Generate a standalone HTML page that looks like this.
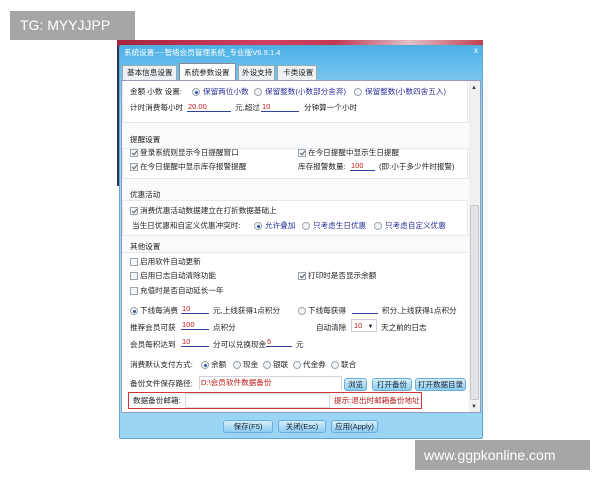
<!DOCTYPE html>
<html><head><meta charset="utf-8"><style>
*{margin:0;padding:0;box-sizing:border-box}
body{width:600px;height:480px;background:#fff;position:relative;overflow:hidden;font-family:"Liberation Sans","Noto Sans CJK SC",sans-serif;font-size:7.6px;color:#222}
.a{position:absolute;white-space:nowrap;line-height:10px}
.b{color:#2a2f9a}
.r{color:#c01818}
.u{position:absolute;border-bottom:1px solid #3340a0;height:10px;line-height:10px;color:#c01818;font-size:7.5px;padding-left:1px}
.cb{position:absolute;width:8px;height:8px;border:1px solid #9aa4ae;background:#f4f6f8}
.cb.on::after{content:"";position:absolute;left:1.5px;top:0px;width:2px;height:4px;border:solid #555;border-width:0 1px 1px 0;transform:rotate(40deg)}
.rd{position:absolute;width:8px;height:8px;border:1px solid #9aa4ae;border-radius:50%;background:#f4f6f8}
.rd.on::after{content:"";position:absolute;left:1.5px;top:1.5px;width:3px;height:3px;border-radius:50%;background:#2a52a8}
.sec{position:absolute;left:122px;width:346px;border:1px solid #e6e9ec;border-top:none;background:#fff}
.gl{position:absolute;height:1px;background:#e3e6ea}
.btn{position:absolute;height:13px;border:1px solid #6aaedd;border-radius:3px;background:linear-gradient(#d6eefc,#8fccf2);text-align:center;line-height:11px;font-size:7.5px;color:#123}
</style></head><body>
<div style="position:absolute;left:10px;top:11px;width:125px;height:29px;background:#a6a6a6;color:#fff;font-size:14px;line-height:29px;padding-left:10px">TG: MYYJJPP</div>
<div style="position:absolute;left:117px;top:40px;width:366px;height:6px;background:linear-gradient(90deg,#a5243e,#d04060 40%,#c03a55 60%,#e0c0c8 80%,#c04050)"></div>
<div style="position:absolute;left:117px;top:46px;width:4px;height:140px;background:#2a3550"></div>
<div style="position:absolute;left:119px;top:45px;width:364px;height:394px;background:linear-gradient(#4cb0e6,#9ad6f4 60px);border:1px solid #5aa8d8;border-radius:2px"></div>
<div class="a" style="left:124px;top:48px;color:#fff">系统设置----智络会员管理系统_专业版V6.9.1.4</div>
<div class="a" style="left:474px;top:46px;color:#fff;font-size:8px">x</div>
<div style="position:absolute;left:122px;top:65px;width:55px;height:15px;background:#eef1f4;border:1px solid #9aa;border-bottom:none"></div>
<div class="a" style="left:127px;top:68px">基本信息设置</div>
<div style="position:absolute;left:179px;top:63px;width:57px;height:17px;background:#fff;border:1px solid #889;border-bottom:none"></div>
<div class="a" style="left:184px;top:68px">系统参数设置</div>
<div style="position:absolute;left:238px;top:65px;width:37px;height:15px;background:#eef1f4;border:1px solid #9aa;border-bottom:none"></div>
<div class="a" style="left:242px;top:68px">外设支持</div>
<div style="position:absolute;left:277px;top:65px;width:40px;height:15px;background:#eef1f4;border:1px solid #9aa;border-bottom:none"></div>
<div class="a" style="left:283px;top:68px">卡类设置</div>
<div style="position:absolute;left:121px;top:80px;width:360px;height:333px;background:#fafbfc;border:1px solid #99b"></div>
<div class="sec" style="top:81px;height:42px"></div>
<div class="sec" style="top:148px;height:31px;border-top:1px solid #e6e9ec"></div>
<div class="sec" style="top:200px;height:36px;border-top:1px solid #e6e9ec"></div>
<div style="position:absolute;left:122px;top:252px;width:346px;height:160px;background:#fff;border-top:1px solid #e6e9ec"></div>
<div style="position:absolute;left:469px;top:81px;width:11px;height:331px;background:#f0f0f0"></div>
<div style="position:absolute;left:470px;top:205px;width:9px;height:195px;background:#e2e4e6;border:1px solid #c4c8cc;border-radius:2px"></div>
<div class="a" style="left:471px;top:83px;font-size:6px;color:#444">▲</div>
<div class="a" style="left:471px;top:402px;font-size:6px;color:#444">▼</div>

<div class="a" style="left:130px;top:87px">金额 小数 设置:</div>
<div class="rd on" style="left:192px;top:88px"></div><div class="a b" style="left:203px;top:87px">保留两位小数</div>
<div class="rd" style="left:254px;top:88px"></div><div class="a b" style="left:265px;top:87px">保留整数(小数部分舍弃)</div>
<div class="rd" style="left:354px;top:88px"></div><div class="a b" style="left:365px;top:87px">保留整数(小数四舍五入)</div>
<div class="a" style="left:130px;top:103px">计时消费每小时</div>
<div class="u" style="left:187px;top:102px;width:44px">20.00</div>
<div class="a" style="left:235px;top:103px">元,超过</div>
<div class="u" style="left:261px;top:102px;width:38px">10</div>
<div class="a" style="left:304px;top:103px">分钟算一个小时</div>

<div class="a" style="left:130px;top:135px">提醒设置</div>
<div class="cb on" style="left:130px;top:149px"></div><div class="a" style="left:140px;top:148px">登录系统则显示今日提醒窗口</div>
<div class="cb on" style="left:298px;top:149px"></div><div class="a" style="left:308px;top:148px">在今日提醒中显示生日提醒</div>
<div class="cb on" style="left:130px;top:163px"></div><div class="a" style="left:140px;top:162px">在今日提醒中显示库存报警提醒</div>
<div class="a" style="left:298px;top:162px">库存报警数量:</div>
<div class="u" style="left:350px;top:161px;width:25px">100</div>
<div class="a" style="left:379px;top:162px">(即:小于多少件时报警)</div>

<div class="a" style="left:130px;top:190px">优惠活动</div>
<div class="cb on" style="left:130px;top:207px"></div><div class="a" style="left:140px;top:206px">消费优惠活动数据建立在打折数据基础上</div>
<div class="a" style="left:132px;top:221px">当生日优惠和自定义优惠冲突时:</div>
<div class="rd on" style="left:254px;top:222px"></div><div class="a b" style="left:265px;top:221px">允许叠加</div>
<div class="rd" style="left:302px;top:222px"></div><div class="a b" style="left:313px;top:221px">只考虑生日优惠</div>
<div class="rd" style="left:374px;top:222px"></div><div class="a b" style="left:385px;top:221px">只考虑自定义优惠</div>

<div class="a" style="left:130px;top:242px">其他设置</div>
<div class="gl" style="left:166px;top:252px;width:302px"></div>
<div class="cb" style="left:130px;top:258px"></div><div class="a" style="left:140px;top:257px">启用软件自动更新</div>
<div class="cb" style="left:130px;top:272px"></div><div class="a" style="left:140px;top:271px">启用日志自动清除功能</div>
<div class="cb on" style="left:298px;top:272px"></div><div class="a" style="left:308px;top:271px">打印时是否显示余额</div>
<div class="cb" style="left:130px;top:287px"></div><div class="a" style="left:140px;top:286px">充值时是否自动延长一年</div>

<div class="rd on" style="left:130px;top:307px"></div><div class="a" style="left:140px;top:306px">下线每消费</div>
<div class="u" style="left:181px;top:304px;width:28px">10</div>
<div class="a" style="left:213px;top:306px">元,上线获得1点积分</div>
<div class="rd" style="left:298px;top:307px"></div><div class="a" style="left:308px;top:306px">下线每获得</div>
<div class="u" style="left:352px;top:304px;width:26px"></div>
<div class="a" style="left:382px;top:306px">积分,上线获得1点积分</div>
<div class="a" style="left:130px;top:323px">推荐会员可获</div>
<div class="u" style="left:181px;top:320px;width:28px">100</div>
<div class="a" style="left:213px;top:323px">点积分</div>
<div class="a" style="left:316px;top:323px">自动清除</div>
<div style="position:absolute;left:351px;top:319px;width:26px;height:13px;border:1px solid #ccd;background:#fff;font-size:7.5px;line-height:11px;padding-left:2px;color:#c01818">10 <span style="color:#222;font-size:6px;margin-left:3px">▼</span></div>
<div class="a" style="left:381px;top:323px">天之前的日志</div>
<div class="a" style="left:130px;top:340px">会员每积达到</div>
<div class="u" style="left:181px;top:337px;width:28px">10</div>
<div class="a" style="left:213px;top:340px">分可以兑换现金</div>
<div class="u" style="left:266px;top:337px;width:26px">5</div>
<div class="a" style="left:296px;top:340px">元</div>

<div class="a" style="left:130px;top:360px">消费默认支付方式:</div>
<div class="rd on" style="left:201px;top:361px"></div><div class="a" style="left:211px;top:360px">余额</div>
<div class="rd" style="left:233px;top:361px"></div><div class="a" style="left:243px;top:360px">现金</div>
<div class="rd" style="left:263px;top:361px"></div><div class="a" style="left:273px;top:360px">银联</div>
<div class="rd" style="left:293px;top:361px"></div><div class="a" style="left:303px;top:360px">代金券</div>
<div class="rd" style="left:331px;top:361px"></div><div class="a" style="left:341px;top:360px">联合</div>
<div class="a" style="left:130px;top:379px">备份文件保存路径:</div>
<div style="position:absolute;left:199px;top:376px;width:143px;height:14px;border:1px solid #d0d4d8;border-bottom:none;background:#fff"></div>
<div class="a r" style="left:201px;top:378px">D:\会员软件数据备份</div>
<div class="btn" style="left:344px;top:378px;width:23px">浏览</div>
<div class="btn" style="left:372px;top:378px;width:40px">打开备份</div>
<div class="btn" style="left:415px;top:378px;width:51px">打开数据目录</div>
<div style="position:absolute;left:128px;top:392px;width:294px;height:17px;border:1.5px solid #d03838"></div>
<div class="a" style="left:133px;top:396px">数据备份邮箱:</div>
<div style="position:absolute;left:185px;top:393px;width:145px;height:15px;border:1px solid #d8dbe0;background:#fff"></div>
<div class="a r" style="left:334px;top:396px">提示:退出时邮箱备份地址</div>

<div class="btn" style="left:223px;top:420px;width:50px">保存(F5)</div>
<div class="btn" style="left:278px;top:420px;width:48px">关闭(Esc)</div>
<div class="btn" style="left:331px;top:420px;width:47px">应用(Apply)</div>

<div style="position:absolute;left:415px;top:440px;width:175px;height:30px;background:#a6a6a6;color:#fff;font-size:14px;line-height:30px;padding-left:9px">www.ggpkonline.com</div>
</body></html>
